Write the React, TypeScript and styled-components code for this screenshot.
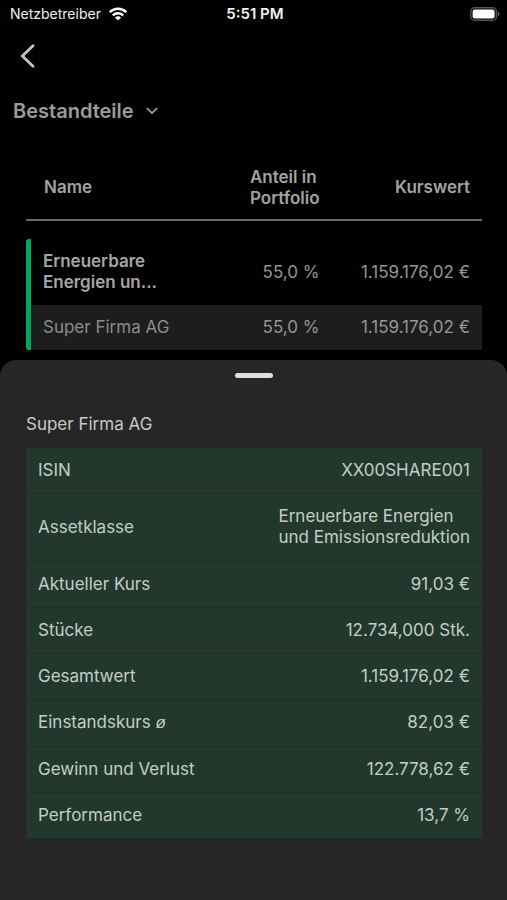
import React from "react";
import styled, { createGlobalStyle } from "styled-components";

const GlobalStyle = createGlobalStyle`
  * { box-sizing: border-box; }
  body {
    margin: 0;
    background: #000;
    font-family: Inter, "Liberation Sans", sans-serif;
    font-size: 17px;
    line-height: 21px;
  }
`;

const Screen = styled.main`
  display: flex;
  flex-direction: column;
  min-height: 100vh;
  background: #000;
`;

const StatusBar = styled.header`
  display: grid;
  grid-template-columns: 1fr auto 1fr;
  align-items: center;
  height: 27px;
  padding: 0 7px 0 10px;
  color: #f2f2f2;
  font-size: 14px;
`;

const Carrier = styled.div`
  display: flex;
  align-items: center;
  gap: 8px;
`;

const Clock = styled.time`
  font-size: 15px;
  font-weight: 600;
`;

const BatterySlot = styled.div`
  display: flex;
  justify-content: flex-end;
`;

const NavBar = styled.nav`
  display: flex;
  align-items: center;
  height: 57px;
  padding: 0 16px;
`;

const BackButton = styled.button`
  display: flex;
  padding: 4px;
  border: 0;
  background: none;
  color: #c4c4c4;
`;

const SectionButton = styled.button`
  display: flex;
  align-items: center;
  align-self: flex-start;
  gap: 12px;
  height: 54px;
  padding: 0 13px;
  border: 0;
  background: none;
  color: #9c9c9c;
  font: inherit;
  font-size: 20px;
  font-weight: 600;
`;

const Holdings = styled.section`
  padding: 18px 25px 10px 26px;
`;

const HoldingsTable = styled.table`
  width: 100%;
  border-collapse: separate;
  border-spacing: 0;
  table-layout: fixed;
  color: #969696;
`;

const NameCol = styled.col`
  width: 40%;
`;

const ShareCol = styled.col`
  width: 27%;
`;

const HeadCell = styled.th<{ $align?: "left" | "right" }>`
  height: 65px;
  padding: 0 12px 0 18px;
  border-bottom: 2px solid #6a6a6a;
  color: #a3a3a3;
  font-weight: 600;
  text-align: ${(p) => p.$align ?? "left"};
`;

const HeadLines = styled.span`
  display: inline-block;
  text-align: left;
`;

const HoldingsBody = styled.tbody`
  &::before {
    content: "";
    display: block;
    height: 18px;
  }
`;

const HoldingRow = styled.tr<{ $nested?: boolean }>`
  height: ${(p) => (p.$nested ? 45 : 66)}px;
  background: ${(p) => (p.$nested ? "#1d1d1d" : "transparent")};
`;

const NameCell = styled.th<{ $strong?: boolean }>`
  padding: 0 0 0 12px;
  border-left: 5px solid #06a65a;
  border-radius: ${(p) => (p.$strong ? "3px 0 0 0" : "0 0 0 3px")};
  color: ${(p) => (p.$strong ? "#a6a6a6" : "#8c8c8c")};
  font-weight: ${(p) => (p.$strong ? 600 : 400)};
  text-align: left;
`;

const NumberCell = styled.td`
  padding: 0 12px 0 0;
  text-align: right;
  white-space: nowrap;
`;

const Sheet = styled.section`
  display: flex;
  flex: 1;
  flex-direction: column;
  padding: 13px 25px 62px 26px;
  border-radius: 16px 16px 0 0;
  background: #262626;
`;

const Handle = styled.button`
  align-self: center;
  width: 38px;
  height: 5px;
  padding: 0;
  border: 0;
  border-radius: 3px;
  background: #dedede;
`;

const SheetTitle = styled.h2`
  margin: 36px 0 13px;
  color: #c8c8c8;
  font-size: 17px;
  font-weight: 400;
`;

const DetailTable = styled.table`
  width: 100%;
  height: 390px;
  border-collapse: separate;
  border-spacing: 0;
  background: #22382d;
  color: #c3cdc7;
`;

const DetailRow = styled.tr`
  &:not(:last-child) > * {
    border-bottom: 1px solid #262b28;
  }
`;

const DetailLabel = styled.th`
  padding: 12px;
  font-weight: 400;
  text-align: left;
`;

const AverageSign = styled.i`
  font-family: "Liberation Sans", sans-serif;
`;

const DetailValue = styled.td`
  padding: 12px;
  text-align: right;
`;

const ValueLines = styled.span`
  display: inline-block;
  text-align: left;
`;

const WifiIcon = () => (
  <svg width="18" height="14" viewBox="0 0 18 14" aria-hidden="true">
    <g fill="none" stroke="#fff" strokeWidth="2.3">
      <path d="M0.8 5.2C5.4 0.6 12.6 0.6 17.2 5.2" />
      <path d="M3.8 8.4C6.8 5.5 11.2 5.5 14.2 8.4" />
    </g>
    <path d="M9 13.6L5.9 10.4C7.7 8.8 10.3 8.8 12.1 10.4Z" fill="#fff" />
  </svg>
);

const BatteryIcon = () => (
  <svg width="30" height="14" viewBox="0 0 30 14" aria-hidden="true">
    <rect x="0.8" y="0.8" width="25.6" height="12.4" rx="3.8" fill="none" stroke="#555" strokeWidth="1.4" />
    <rect x="2.6" y="2.6" width="22" height="8.8" rx="2.2" fill="#fff" />
    <path d="M27.8 4.8C29.9 5.4 29.9 8.6 27.8 9.2Z" fill="#666" />
  </svg>
);

const BackIcon = () => (
  <svg width="16" height="24" viewBox="0 0 16 24" fill="none" stroke="currentColor" strokeWidth="2.8" strokeLinecap="round" strokeLinejoin="miter" aria-hidden="true">
    <path d="M13 1.8L2.4 12L13 22.2" />
  </svg>
);

const ChevronDown = () => (
  <svg width="12" height="8" viewBox="0 0 12 8" fill="none" stroke="currentColor" strokeWidth="1.8" strokeLinecap="round" strokeLinejoin="round" aria-hidden="true">
    <path d="M1.4 1.6L6 6.2L10.6 1.6" />
  </svg>
);

const holdings = [
  { lines: ["Erneuerbare", "Energien un..."], share: "55,0 %", value: "1.159.176,02 €", nested: false },
  { lines: ["Super Firma AG"], share: "55,0 %", value: "1.159.176,02 €", nested: true },
];

const details = [
  { label: "ISIN", lines: ["XX00SHARE001"] },
  { label: "Assetklasse", lines: ["Erneuerbare Energien", "und Emissionsreduktion"] },
  { label: "Aktueller Kurs", lines: ["91,03 €"] },
  { label: "Stücke", lines: ["12.734,000 Stk."] },
  { label: "Gesamtwert", lines: ["1.159.176,02 €"] },
  { label: "Einstandskurs", average: true, lines: ["82,03 €"] },
  { label: "Gewinn und Verlust", lines: ["122.778,62 €"] },
  { label: "Performance", lines: ["13,7 %"] },
];

const Lines = ({ lines }: { lines: string[] }) => (
  <>
    {lines.map((line, i) => (
      <React.Fragment key={line}>
        {i > 0 && <br />}
        {line}
      </React.Fragment>
    ))}
  </>
);

export default function App() {
  return (
    <Screen>
      <GlobalStyle />
      <StatusBar>
        <Carrier>
          Netzbetreiber
          <WifiIcon />
        </Carrier>
        <Clock>5:51 PM</Clock>
        <BatterySlot>
          <BatteryIcon />
        </BatterySlot>
      </StatusBar>
      <NavBar>
        <BackButton type="button" aria-label="Zurück">
          <BackIcon />
        </BackButton>
      </NavBar>
      <SectionButton type="button">
        Bestandteile
        <ChevronDown />
      </SectionButton>
      <Holdings>
        <HoldingsTable>
          <colgroup>
            <NameCol />
            <ShareCol />
            <col />
          </colgroup>
          <thead>
            <tr>
              <HeadCell scope="col">Name</HeadCell>
              <HeadCell scope="col" $align="right">
                <HeadLines>
                  <Lines lines={["Anteil in", "Portfolio"]} />
                </HeadLines>
              </HeadCell>
              <HeadCell scope="col" $align="right">Kurswert</HeadCell>
            </tr>
          </thead>
          <HoldingsBody>
            {holdings.map((h) => (
              <HoldingRow key={h.lines[0]} $nested={h.nested}>
                <NameCell scope="row" $strong={!h.nested}>
                  <Lines lines={h.lines} />
                </NameCell>
                <NumberCell>{h.share}</NumberCell>
                <NumberCell>{h.value}</NumberCell>
              </HoldingRow>
            ))}
          </HoldingsBody>
        </HoldingsTable>
      </Holdings>
      <Sheet>
        <Handle type="button" aria-label="Details schließen" />
        <SheetTitle>Super Firma AG</SheetTitle>
        <DetailTable>
          <tbody>
            {details.map((d) => (
              <DetailRow key={d.label}>
                <DetailLabel scope="row">
                  {d.label}
                  {d.average && <AverageSign> ø</AverageSign>}
                </DetailLabel>
                <DetailValue>
                  <ValueLines>
                    <Lines lines={d.lines} />
                  </ValueLines>
                </DetailValue>
              </DetailRow>
            ))}
          </tbody>
        </DetailTable>
      </Sheet>
    </Screen>
  );
}
